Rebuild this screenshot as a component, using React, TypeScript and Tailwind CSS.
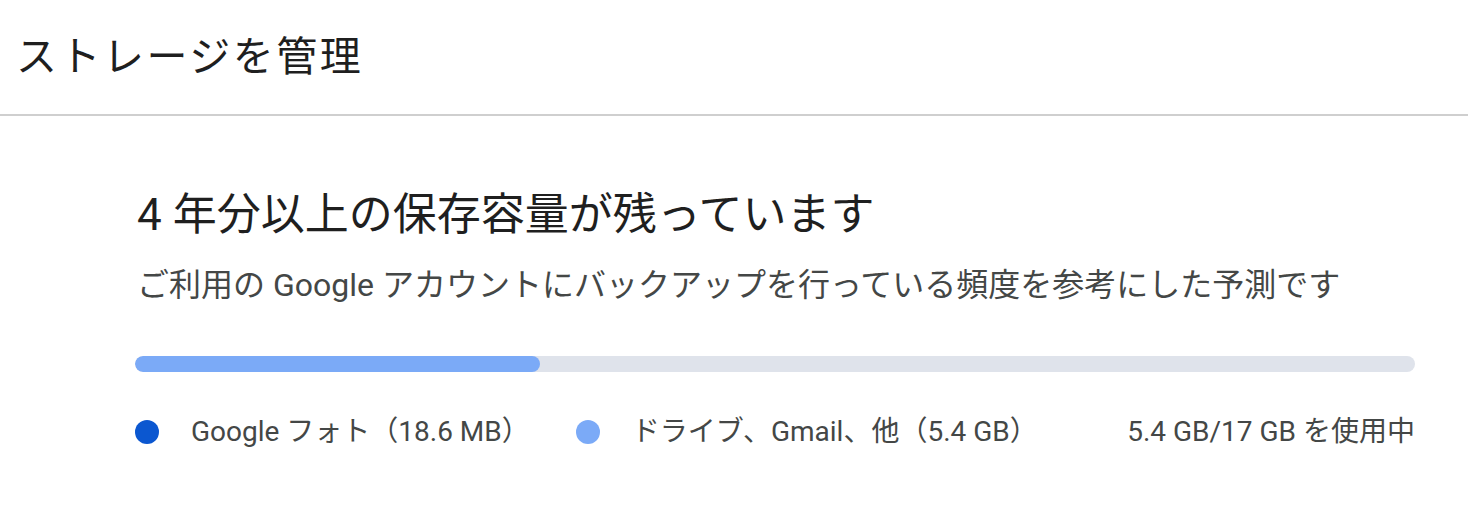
const font = "font-['Roboto','Noto_Sans_CJK_JP',sans-serif]";

const LegendItem = ({ color, label }: { color: string; label: string }) => (
  <div className="flex items-center">
    <span className={`w-[24px] h-[24px] rounded-full ${color}`} />
    <span className="ml-[32px]">{label}</span>
  </div>
);

const App = () => {
  return (
    <div className={`w-[1468px] h-[514px] bg-white ${font}`}>
      <header className="h-[116px] border-b-2 border-[#cfcfcf] flex items-center pl-[16px]">
        <h1 className="text-[41px] leading-none tracking-[2.5px] text-[#1f1f1f]">ストレージを管理</h1>
      </header>

      <div className="pl-[135px] pr-[53px] pt-[73px]">
        <h2 className="text-[44px] leading-[52px] text-[#1f1f1f] pl-[2px]">4 年分以上の保存容量が残っています</h2>
        <p className="mt-[24px] text-[32px] leading-[40px] text-[#444746] pl-[2px]">
          ご利用の Google アカウントにバックアップを行っている頻度を参考にした予測です
        </p>

        <div className="mt-[51px] h-[16px] rounded-full bg-[#dfe3eb] overflow-hidden">
          <div className="h-full w-[405px] rounded-full bg-[#7baaf7]" />
        </div>

        <div className="mt-[40px] flex items-center text-[28px] leading-[40px] text-[#444746]">
          <LegendItem color="bg-[#0b57d0]" label="Google フォト（18.6 MB）" />
          <div className="ml-[46px]">
            <LegendItem color="bg-[#7baaf7]" label="ドライブ、Gmail、他（5.4 GB）" />
          </div>
          <span className="ml-auto">5.4 GB/17 GB を使用中</span>
        </div>
      </div>
    </div>
  );
};

export default App;
